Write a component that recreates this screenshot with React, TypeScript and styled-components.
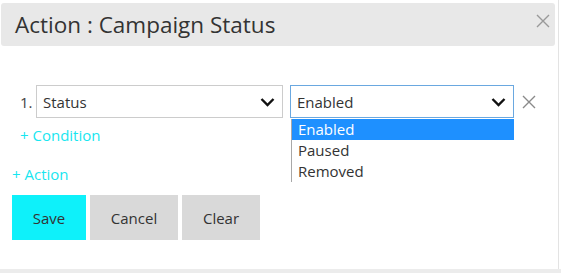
import styled, { createGlobalStyle } from "styled-components";

const Global = createGlobalStyle`
  body {
    margin: 0;
    background: #fff;
    font-family: "Open Sans", "Liberation Sans", sans-serif;
    color: #333;
  }
`;

const Page = styled.div`
  width: 561px;
  height: 273px;
  display: flex;
  flex-direction: column;
  overflow: hidden;
`;

const Modal = styled.div`
  width: 559px;
  height: 269px;
  border-right: 1px solid #e3e3e3;
  box-sizing: border-box;
  padding: 3px 3px 0 1px;
`;

const BottomStrip = styled.div`
  height: 4px;
  background: #ececec;
`;

const Header = styled.div`
  height: 43px;
  background: #e8e8e8;
  border-radius: 3px;
  display: flex;
  align-items: center;
  justify-content: space-between;
  padding: 0 4px 0 14px;
`;

const Title = styled.h2`
  margin: 0;
  font-size: 22.5px;
  font-weight: 400;
  color: #333;
`;

const CloseButton = styled.button<{ $top?: number }>`
  border: 0;
  background: none;
  padding: 0;
  width: 16px;
  height: 16px;
  display: flex;
  align-items: center;
  justify-content: center;
  align-self: ${(p) => (p.$top !== undefined ? "flex-start" : "center")};
  margin-top: ${(p) => p.$top ?? 0}px;
  cursor: pointer;
`;

const Body = styled.div`
  padding: 39px 0 0 0;
`;

const ConditionRow = styled.div`
  display: flex;
  align-items: center;
  padding-left: 19px;
`;

const Index = styled.span`
  width: 16px;
  font-size: 15px;
  color: #444;
`;

const SelectBox = styled.div<{ $width: number; $focused?: boolean }>`
  position: relative;
  width: ${(p) => p.$width}px;
  height: 33px;
  box-sizing: border-box;
  border: 1px solid ${(p) => (p.$focused ? "#6aa8e0" : "#cccccc")};
  display: flex;
  align-items: center;
  justify-content: space-between;
  padding: 1px 7px 0 6px;
  font-size: 15px;
  color: #333;
  margin-right: 7px;
`;

const Dropdown = styled.ul`
  position: absolute;
  top: 33px;
  left: 0;
  width: 223px;
  margin: 0;
  padding: 0;
  list-style: none;
  background: #fff;
  border-left: 1px solid #a8a8a8;
  box-sizing: border-box;
`;

const Option = styled.li<{ $active?: boolean }>`
  height: 21px;
  line-height: 21px;
  padding-left: 6px;
  font-size: 15px;
  color: ${(p) => (p.$active ? "#fff" : "#333")};
  background: ${(p) => (p.$active ? "#1e90ff" : "transparent")};
`;

const AddLink = styled.a<{ $indent: number; $top: number }>`
  display: block;
  width: max-content;
  margin: ${(p) => p.$top}px 0 0 ${(p) => p.$indent}px;
  font-size: 15px;
  line-height: 20px;
  color: #18e6f0;
  text-decoration: none;
  cursor: pointer;
`;

const Actions = styled.div`
  display: flex;
  gap: 4px;
  margin: 11px 0 0 11px;
`;

const Button = styled.button<{ $primary?: boolean; $width: number }>`
  width: ${(p) => p.$width}px;
  height: 45px;
  border: 0;
  border-radius: 0;
  background: ${(p) => (p.$primary ? "#0ef1fa" : "#d9d9d9")};
  font-family: inherit;
  font-size: 15px;
  color: #333;
  cursor: pointer;
`;

const Chevron = () => (
  <svg width="15" height="10" viewBox="0 0 15 10">
    <path d="M1.5 2 L7.5 8 L13.5 2" fill="none" stroke="#111" strokeWidth="2.4" />
  </svg>
);

const Cross = ({ size = 14, color = "#8a8a8a" }: { size?: number; color?: string }) => (
  <svg width={size} height={size} viewBox="0 0 14 14">
    <path d="M1 1 L13 13 M13 1 L1 13" stroke={color} strokeWidth="1.4" />
  </svg>
);

const App = () => {
  const options = ["Enabled", "Paused", "Removed"];

  return (
    <Page>
      <Global />
      <Modal>
        <Header>
          <Title>Action : Campaign Status</Title>
          <CloseButton $top={10}>
            <Cross size={14} color="#999" />
          </CloseButton>
        </Header>
        <Body>
          <ConditionRow>
            <Index>1.</Index>
            <SelectBox $width={247}>
              <span>Status</span>
              <Chevron />
            </SelectBox>
            <SelectBox $width={224} $focused>
              <span>Enabled</span>
              <Chevron />
              <Dropdown>
                {options.map((o) => (
                  <Option key={o} $active={o === "Enabled"}>
                    {o}
                  </Option>
                ))}
              </Dropdown>
            </SelectBox>
            <CloseButton>
              <Cross size={14} />
            </CloseButton>
          </ConditionRow>
          <AddLink $indent={19} $top={7}>+ Condition</AddLink>
          <AddLink $indent={11} $top={19}>+ Action</AddLink>
          <Actions>
            <Button $primary $width={74}>Save</Button>
            <Button $width={88}>Cancel</Button>
            <Button $width={78}>Clear</Button>
          </Actions>
        </Body>
      </Modal>
      <BottomStrip />
    </Page>
  );
};

export default App;
